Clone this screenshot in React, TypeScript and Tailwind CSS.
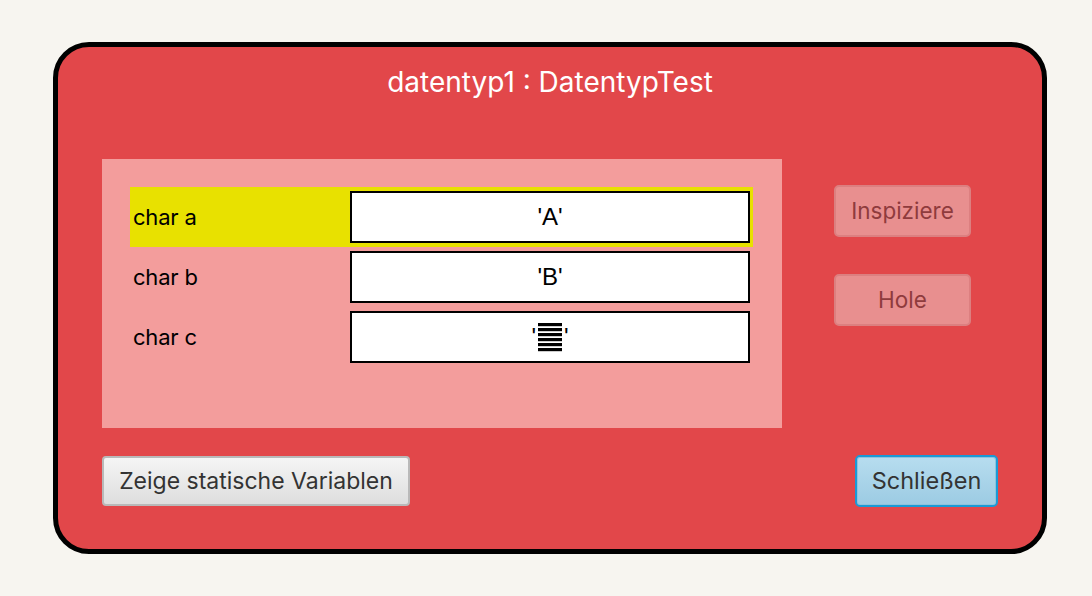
import React from 'react';

type Field = { name: string; value: React.ReactNode; selected?: boolean };

const BarsGlyph: React.FC = () => (
  <svg width="26" height="32" viewBox="0 0 26 32" className="inline-block align-middle mx-[1px]">
    {[2, 7, 12, 17, 22, 27].map((y) => (
      <rect key={y} x="1" y={y} width="24" height="3.2" fill="#000" />
    ))}
  </svg>
);

const fields: Field[] = [
  { name: 'char a', value: "'A'", selected: true },
  { name: 'char b', value: "'B'" },
  {
    name: 'char c',
    value: (
      <span className="flex items-center">
        <span>'</span>
        <BarsGlyph />
        <span>'</span>
      </span>
    ),
  },
];

const FieldRow: React.FC<{ field: Field }> = ({ field }) => (
  <div className={`flex items-center h-[60px] pl-[3px] pr-[3px] ${field.selected ? 'bg-[#e8e100]' : ''}`}>
    <div className="w-[217px] text-[22px] tracking-[-0.2px] text-black">{field.name}</div>
    <div className="flex-1 h-[52px] border-2 border-black bg-white flex items-center justify-center text-[24px] text-black font-['Liberation_Sans',Arial,sans-serif]">
      {field.value}
    </div>
  </div>
);

const DisabledButton: React.FC<{ label: string }> = ({ label }) => (
  <button className="w-[137px] h-[52px] rounded-[5px] border-2 border-[#dc7f80] bg-[#e88f8f] text-[22.5px] text-[#8f3b3d]">
    {label}
  </button>
);

export default function App() {
  return (
    <div className="w-[1092px] h-[596px] bg-[#f7f5f0] pt-[42px] pl-[53px] font-['Inter',sans-serif]">
      <div className="w-[994px] h-[512px] rounded-[36px] border-[5px] border-black bg-[#e2474a] px-[44px] flex flex-col">
        <div className="pt-[18px] h-[112px] text-center text-white text-[28px] leading-[34px]">
          datentyp1 : DatentypTest
        </div>
        <div className="flex">
          <div className="w-[680px] h-[269px] bg-[#f39d9c] p-[28px] pr-[29px]">
            {fields.map((f) => (
              <FieldRow key={f.name} field={f} />
            ))}
          </div>
          <div className="ml-[52px] pt-[26px] flex flex-col gap-[37px]">
            <DisabledButton label="Inspiziere" />
            <DisabledButton label="Hole" />
          </div>
        </div>
        <div className="mt-[27px] flex items-center justify-between">
          <button className="w-[308px] h-[50px] rounded-[4px] border-2 border-[#b9b9b9] bg-gradient-to-b from-[#f5f5f5] to-[#dedede] text-[23px] text-[#333]">
            Zeige statische Variablen
          </button>
          <button className="w-[143px] h-[52px] rounded-[5px] border-2 border-[#1a9ad6] bg-gradient-to-b from-[#b7ddef] to-[#9ccbe3] text-[23.5px] text-[#333] shadow-[inset_0_0_0_1px_#8fc3dd]">
            Schließen
          </button>
        </div>
      </div>
    </div>
  );
}
